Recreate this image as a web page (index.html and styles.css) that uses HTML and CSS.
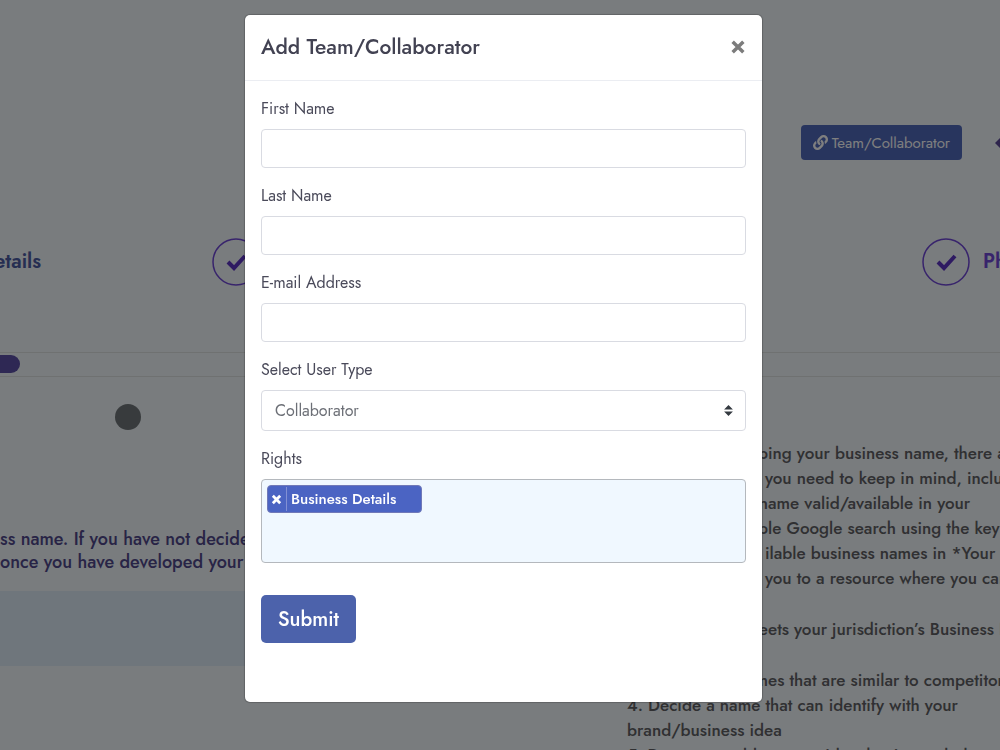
FILE: index.html
```
<!DOCTYPE html>
<html lang="en">
<head>
    <meta charset="UTF-8">
    <meta name="viewport" content="width=device-width, initial-scale=1.0">
    <title>Add Team/Collaborator</title>
    <link rel="stylesheet" href="styles.css">
</head>
<body>
    <div class="page">
        <header class="toolbar">
            <button type="button" class="team-button">
                <svg class="link-icon" viewBox="0 0 512 512" aria-hidden="true"><path d="M326.6 185.4c59.7 59.8 58.9 155.7.4 214.6-.1.1-.2.3-.4.4l-67.2 67.2c-59.3 59.3-155.7 59.3-215 0-59.3-59.3-59.3-155.7 0-215l37.1-37.1c9.8-9.8 26.8-3.3 27.3 10.6.6 17.7 3.8 35.5 9.7 52.7 2 5.8.6 12.3-3.8 16.6l-13.1 13.1c-28 28-28.9 73.7-1.2 102 28 28.6 74.1 28.7 102.3.5l67.2-67.2c28.2-28.2 28.1-73.8 0-101.8-3.7-3.7-7.4-6.6-10.3-8.6a16 16 0 0 1-6.9-12.6c-.4-10.6 3.3-21.5 11.7-29.8l21.1-21.1c5.5-5.5 14.2-6.2 20.6-1.7a152.5 152.5 0 0 1 20.5 17.2zM467.5 44.4c-59.3-59.3-155.7-59.3-215 0l-67.2 67.2c-.1.1-.3.3-.4.4-58.6 58.9-59.4 154.8.4 214.6a152.5 152.5 0 0 0 20.5 17.2c6.4 4.5 15.1 3.8 20.6-1.7l21.1-21.1c8.4-8.4 12.1-19.2 11.7-29.8a16 16 0 0 0-6.9-12.6c-2.9-2-6.6-4.9-10.3-8.6-28.1-28.1-28.2-73.6 0-101.8l67.2-67.2c28.2-28.2 74.3-28.1 102.3.5 27.8 28.3 26.9 73.9-1.2 102l-13.1 13.1c-4.4 4.4-5.8 10.8-3.8 16.6 5.9 17.2 9 35 9.7 52.7.5 13.9 17.5 20.4 27.3 10.6l37.1-37.1c59.3-59.3 59.3-155.7 0-215z"/></svg>
                Team/Collaborator
            </button>
            <svg class="arrow-icon" viewBox="0 0 12 12" aria-hidden="true"><path d="M0 6 6 0l6 6-6 6z"/></svg>
        </header>

        <div class="steps">
            <div class="step step-first">Details</div>
            <div class="step">
                <svg class="check" viewBox="0 0 48 48" aria-hidden="true"><circle cx="24" cy="24" r="23"/><path d="m16 24 6 6 11-12"/></svg>
            </div>
            <div class="step">
                <svg class="check" viewBox="0 0 48 48" aria-hidden="true"><circle cx="24" cy="24" r="23"/><path d="m16 24 6 6 11-12"/></svg>
                Photos
            </div>
        </div>

        <div class="progress"><div class="progress-bar"></div></div>

        <main class="columns">
            <section class="question">
                <p>ss name. If you have not decided</p>
                <p>once you have developed your</p>
                <div class="answer"></div>
            </section>
            <section class="tips">
                <p><span class="lead">When develop</span>ing your business name, there are</p>
                <p><span class="lead lead-word">factors that</span>you need to keep in mind, including</p>
                <p><span class="lead">1. Is the n</span>ame valid/available in your</p>
                <p><span class="lead">2. Do a simp</span>le Google search using the keywords</p>
                <p><span class="lead lead-word">for ava</span>ilable business names in *Your</p>
                <p><span class="lead lead-word">will take</span>you to a resource where you can</p>
                <p class="spaced"><span class="lead">3. It me</span>ets your jurisdiction’s Business Name</p>
                <p class="spaced"><span class="lead">Avoid nam</span>es that are similar to competitors</p>
                <p>4. Decide a name that can identify with your</p>
                <p>brand/business idea</p>
                <p>5. Does your address provide what is needed</p>
            </section>
        </main>
        <span class="pointer"></span>
    </div>

    <div class="overlay">
        <div class="modal" role="dialog" aria-labelledby="modalTitle">
            <div class="modal-header">
                <h1 id="modalTitle">Add Team/Collaborator</h1>
                <button type="button" class="close" aria-label="Close">
                    <svg viewBox="0 0 12 12" aria-hidden="true"><path d="m2 2 8 8M10 2l-8 8"/></svg>
                </button>
            </div>
            <form class="modal-body">
                <div class="form-group">
                    <label for="firstName">First Name</label>
                    <input type="text" id="firstName" class="form-control">
                </div>
                <div class="form-group">
                    <label for="lastName">Last Name</label>
                    <input type="text" id="lastName" class="form-control">
                </div>
                <div class="form-group">
                    <label for="email">E-mail Address</label>
                    <input type="email" id="email" class="form-control">
                </div>
                <div class="form-group">
                    <label for="userType">Select User Type</label>
                    <div class="select-wrap">
                        <select id="userType" class="form-control">
                            <option>Collaborator</option>
                        </select>
                        <svg class="select-arrows" viewBox="0 0 8 10" aria-hidden="true"><path d="M4 0 0 4h8zM4 10 0 6h8z"/></svg>
                    </div>
                </div>
                <div class="form-group">
                    <label id="rightsLabel">Rights</label>
                    <div class="rights" role="group" aria-labelledby="rightsLabel">
                        <div class="tag">
                            <button type="button" class="tag-remove" aria-label="Remove Business Details">
                                <svg viewBox="0 0 12 12" aria-hidden="true"><path d="m2 2 8 8M10 2l-8 8"/></svg>
                            </button>
                            <span>Business Details</span>
                        </div>
                    </div>
                </div>
                <button type="submit" class="submit">Submit</button>
            </form>
        </div>
    </div>
</body>
</html>
```
FILE: styles.css
```
* {
    margin: 0;
    padding: 0;
    box-sizing: border-box;
}

body {
    height: 100vh;
    overflow: hidden;
    background-color: #f2f8fc;
    font-family: Jost, Lato, sans-serif;
    font-size: 16px;
    line-height: 24px;
    color: #4a4a5a;
}

button, input, select {
    font-family: inherit;
    font-size: 16px;
}

/* Page behind the modal */
.page {
    position: relative;
    height: 100%;
    overflow: hidden;
    padding-top: 125px;
}

.toolbar {
    display: flex;
    justify-content: flex-end;
    align-items: center;
    gap: 33px;
    margin-right: -7px;
}

.team-button {
    display: flex;
    align-items: center;
    gap: 4px;
    height: 35px;
    padding: 0 12px;
    border: none;
    border-radius: 4px;
    background-color: #506abc;
    color: #fff;
    font-size: 15px;
}

.link-icon {
    width: 15px;
    height: 15px;
    fill: #fff;
}

.arrow-icon {
    width: 12px;
    height: 12px;
    fill: #5c4898;
}

.steps {
    display: grid;
    grid-template-columns: 212px 1fr 78px;
    align-items: center;
    height: 48px;
    margin-top: 78px;
    font-size: 20px;
    font-weight: 600;
    color: #7048d8;
    white-space: nowrap;
}

.step {
    display: flex;
    align-items: center;
    gap: 13px;
}

.step-first {
    justify-content: flex-end;
    width: 41px;
    color: #4c5ca4;
}

.check {
    flex: none;
    width: 48px;
    height: 48px;
    fill: none;
    stroke: #7048d8;
    stroke-width: 1.5;
}

.check path {
    stroke: #5c34c4;
    stroke-width: 4;
}

.progress {
    height: 25px;
    margin-top: 66px;
    padding: 2px 0;
    border: 1px solid #dfe3e2;
    border-width: 1px 0;
}

.progress-bar {
    width: 20px;
    height: 18px;
    border-radius: 0 9px 9px 0;
    background-color: #5c50a8;
}

.columns {
    display: flex;
    white-space: nowrap;
}

.question {
    flex: 1;
    min-width: 0;
    padding-top: 151px;
    overflow: hidden;
    font-size: 18px;
    font-weight: 500;
    line-height: 23px;
    color: #50488c;
}

.answer {
    height: 75px;
    margin-top: 17px;
    background-color: #deecf8;
}

.tips {
    width: 373px;
    padding-top: 64px;
    font-size: 17px;
    font-weight: 500;
    line-height: 25px;
    color: #606064;
}

.lead {
    display: inline-block;
    width: 141px;
    text-align: right;
}

.lead-word {
    width: 138px;
    padding-right: 4px;
}

.spaced {
    margin: 26px 0;
}

.spaced + .spaced {
    margin-bottom: 0;
}

.pointer {
    position: absolute;
    left: 115px;
    top: 404px;
    width: 26px;
    height: 26px;
    border-radius: 50%;
    background-color: #70767a;
}

/* Modal */
.overlay {
    position: fixed;
    inset: 0;
    padding: 15px 0 15px 7px;
    overflow: hidden;
    background-color: rgba(0, 0, 0, 0.5);
}

.modal {
    max-width: 517px;
    margin: 0 auto;
    border-radius: 5px;
    background-color: #fff;
    box-shadow: 0 0 1px 1px rgba(0, 0, 0, 0.2);
}

.modal-header {
    display: flex;
    justify-content: space-between;
    align-items: center;
    height: 66px;
    padding: 0 16px 2px;
    border-bottom: 1px solid #ebedf2;
}

.modal-header h1 {
    font-size: 21px;
    font-weight: 500;
    line-height: 28px;
    color: #424252;
}

.close, .tag-remove {
    display: flex;
    border: none;
    background: none;
    cursor: pointer;
}

.close svg {
    width: 16px;
    height: 16px;
    stroke: #7c7c7c;
    stroke-width: 2.6;
}

.modal-body {
    padding: 16px 16px 59px;
}

.form-group {
    margin-bottom: 16px;
}

.form-group label {
    display: block;
    margin-bottom: 8px;
}

.form-control {
    display: block;
    width: 100%;
    height: 39px;
    padding: 0 13px;
    border: 1px solid #d9dbe2;
    border-radius: 4px;
    background-color: #fff;
    color: #6c6f76;
}

.select-wrap {
    position: relative;
}

.select-wrap select {
    height: 41px;
    appearance: none;
}

.select-arrows {
    position: absolute;
    right: 13px;
    top: 15px;
    width: 9px;
    height: 11px;
    fill: #343a40;
    pointer-events: none;
}

.rights {
    height: 84px;
    padding: 5px;
    border: 1px solid #b4b8bd;
    border-radius: 4px;
    background-color: #f0f8ff;
}

.tag {
    display: flex;
    align-items: center;
    width: 155px;
    height: 28px;
    border: 1px solid #7079b8;
    border-radius: 4px;
    background-color: #4b64c3;
    color: #fff;
    font-size: 15px;
    font-weight: 500;
    white-space: nowrap;
}

.tag-remove {
    align-items: center;
    height: 24px;
    margin-right: 4px;
    padding: 0 4px 0 3px;
    border-right: 1px solid #8290d4;
}

.tag-remove svg {
    width: 11px;
    height: 11px;
    stroke: #fff;
    stroke-width: 3;
}

.submit {
    height: 48px;
    margin-top: 16px;
    padding: 0 17px;
    border: none;
    border-radius: 5px;
    background-color: #4c62ab;
    color: #fff;
    font-size: 20px;
    font-weight: 500;
    cursor: pointer;
}
```
